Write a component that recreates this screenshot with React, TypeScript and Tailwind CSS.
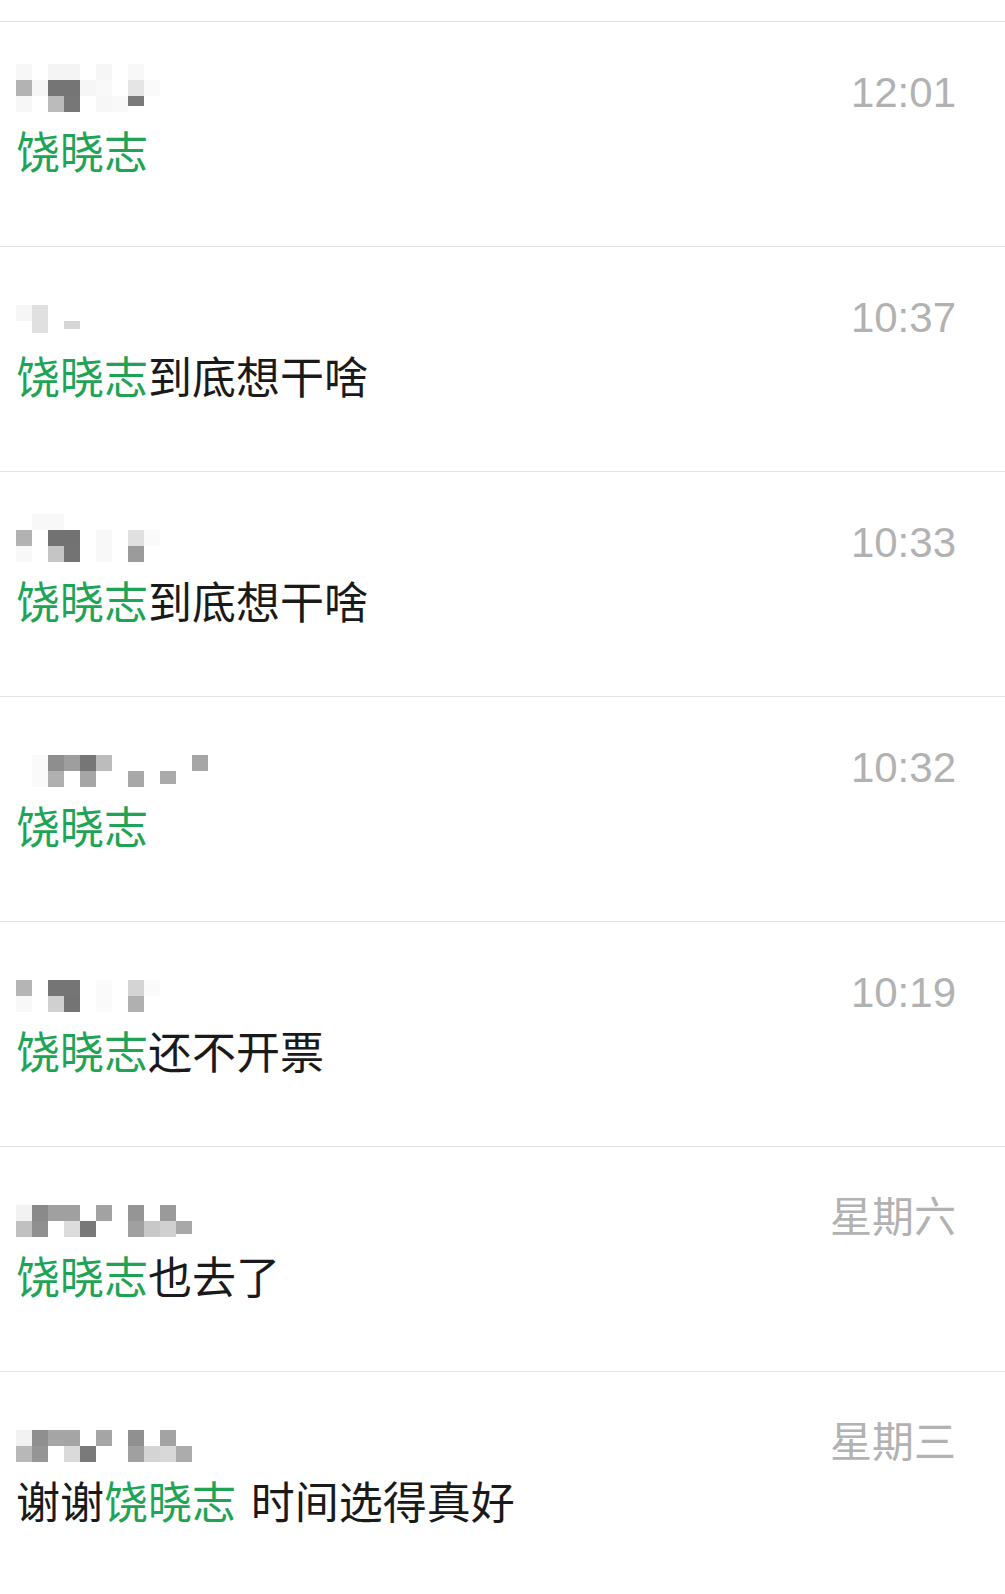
import React from "react";

type Block = [number, number, string, number?];

type Item = {
  time: string;
  blocks: Block[];
  parts: { t: string; g?: boolean; gap?: boolean }[];
};

const items: Item[] = [
  {
    time: "12:01",
    blocks: [
      [0, 0, "#f7f7f7"], [2, 0, "#f4f4f4"], [3, 0, "#f4f4f4"], [5, 0, "#f6f6f6"], [7, 0, "#f8f8f8"],
      [0, 1, "#b3b3b3"], [1, 1, "#f6f6f6"], [2, 1, "#757575"], [3, 1, "#757575"], [4, 1, "#f6f6f6"], [5, 1, "#f9f9f9"], [7, 1, "#e5e5e5"], [8, 1, "#fafafa"],
      [0, 2, "#f7f7f7"], [2, 2, "#bbbbbb"], [3, 2, "#777777"], [5, 2, "#f7f7f7"], [6, 2, "#f9f9f9"], [7, 2, "#7a7a7a", 10],
    ],
    parts: [{ t: "饶晓志", g: true }],
  },
  {
    time: "10:37",
    blocks: [
      [0, 1, "#f6f6f6"], [1, 1, "#e0e0e0"],
      [1, 2, "#e0e0e0", 12], [3, 2, "#d6d6d6", 8],
    ],
    parts: [{ t: "饶晓志", g: true }, { t: "到底想干啥" }],
  },
  {
    time: "10:33",
    blocks: [
      [1, 0, "#f8f8f8"], [2, 0, "#f8f8f8"],
      [0, 1, "#b2b2b2"], [2, 1, "#727272"], [3, 1, "#727272"], [5, 1, "#f8f8f8"], [7, 1, "#e0e0e0"], [8, 1, "#fafafa"],
      [0, 2, "#f8f8f8"], [2, 2, "#c5c5c5"], [3, 2, "#737373"], [5, 2, "#f8f8f8"], [7, 2, "#9b9b9b"],
    ],
    parts: [{ t: "饶晓志", g: true }, { t: "到底想干啥" }],
  },
  {
    time: "10:32",
    blocks: [
      [1, 1, "#fafafa"], [2, 1, "#8e8e8e"], [3, 1, "#9e9e9e"], [4, 1, "#767676"], [5, 1, "#bcbcbc"], [11, 1, "#a6a6a6"],
      [1, 2, "#fafafa"], [2, 2, "#b0b0b0"], [4, 2, "#a6a6a6"], [7, 2, "#a8a8a8"], [9, 2, "#aaaaaa", 13],
    ],
    parts: [{ t: "饶晓志", g: true }],
  },
  {
    time: "10:19",
    blocks: [
      [0, 1, "#b5b5b5"], [2, 1, "#757575"], [3, 1, "#757575"], [5, 1, "#fafafa"], [7, 1, "#d4d4d4"], [8, 1, "#fafafa"],
      [0, 2, "#f8f8f8"], [2, 2, "#d0d0d0"], [3, 2, "#747474"], [5, 2, "#fafafa"], [7, 2, "#b0b0b0"],
    ],
    parts: [{ t: "饶晓志", g: true }, { t: "还不开票" }],
  },
  {
    time: "星期六",
    blocks: [
      [0, 1, "#f2f2f2"], [1, 1, "#8a8a8a"], [2, 1, "#a0a0a0"], [3, 1, "#a0a0a0"], [5, 1, "#a2a2a2"], [7, 1, "#959595"], [9, 1, "#9a9a9a"],
      [0, 2, "#c0c0c0"], [1, 2, "#909090"], [3, 2, "#dcdcdc"], [4, 2, "#787878"], [7, 2, "#a0a0a0"], [8, 2, "#c8c8c8"], [9, 2, "#d0d0d0"], [10, 2, "#a8a8a8", 13],
    ],
    parts: [{ t: "饶晓志", g: true }, { t: "也去了" }],
  },
  {
    time: "星期三",
    blocks: [
      [0, 1, "#f2f2f2"], [1, 1, "#8f8f8f"], [2, 1, "#a5a5a5"], [3, 1, "#a5a5a5"], [5, 1, "#a5a5a5"], [7, 1, "#909090"], [9, 1, "#a3a3a3"],
      [0, 2, "#b8b8b8"], [1, 2, "#959595"], [3, 2, "#dadada"], [4, 2, "#7a7a7a"], [7, 2, "#a0a0a0"], [8, 2, "#d4d4d4"], [9, 2, "#d8d8d8"], [10, 2, "#acacac"],
    ],
    parts: [{ t: "谢谢" }, { t: "饶晓志", g: true }, { t: " " }, { t: "时间选得真好", gap: true }],
  },
];

function Pixelated({ blocks }: { blocks: Block[] }) {
  return (
    <div className="grid h-[48px] grid-cols-[repeat(13,16px)] grid-rows-[repeat(3,16px)]">
      {blocks.map(([c, r, color, h], i) => (
        <div
          key={i}
          style={{
            gridColumnStart: c + 1,
            gridRowStart: r + 1,
            backgroundColor: color,
            height: h ? `${h}px` : "16px",
          }}
        />
      ))}
    </div>
  );
}

function Row({ item }: { item: Item }) {
  return (
    <div className="h-[225px] border-t border-[#e3e3e3] pl-4 pr-[49px] pt-[42px]">
      <div className="flex h-[48px] items-start justify-between">
        <Pixelated blocks={item.blocks} />
        <div className="mt-[8px] text-[42px] leading-[42px] text-[#b2b2b2] [font-family:'Liberation_Sans','Noto_Sans_CJK_SC',sans-serif]">
          {item.time}
        </div>
      </div>
      <div className="mt-[16px] whitespace-pre text-[44px] leading-[44px] text-[#1a1a1a] [font-family:'Noto_Sans_CJK_SC',sans-serif]">
        {item.parts.map((p, i) => (
          <span key={i} className={p.g ? "text-[#1fa455]" : p.gap ? "ml-[5px]" : ""}>
            {p.t}
          </span>
        ))}
      </div>
    </div>
  );
}

export default function App() {
  return (
    <div className="h-[1594px] w-[1005px] overflow-hidden bg-white pt-[21px]">
      {items.map((it, i) => (
        <Row key={i} item={it} />
      ))}
    </div>
  );
}
